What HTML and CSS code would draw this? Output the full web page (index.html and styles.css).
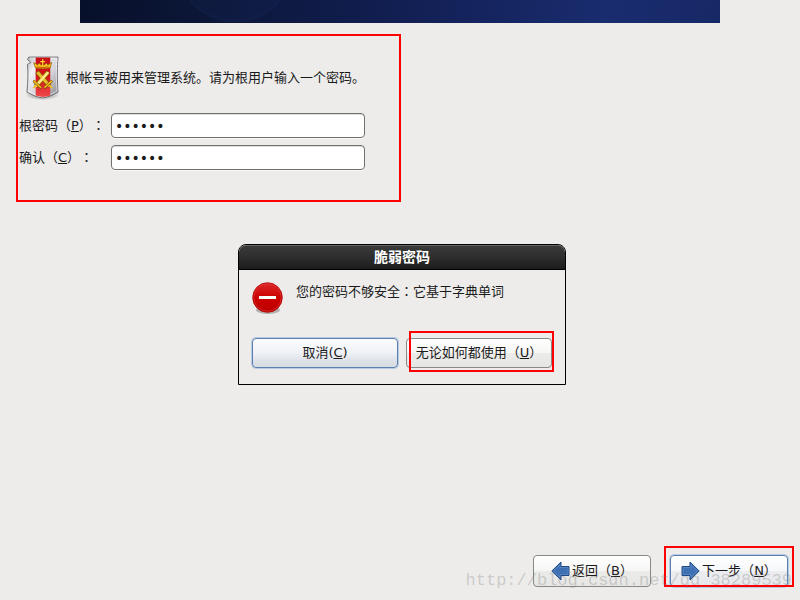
FILE: index.html
```html
<!DOCTYPE html>
<html lang="zh-CN">
<head>
    <meta charset="UTF-8">
    <meta name="viewport" content="width=device-width, initial-scale=1.0">
    <title>根密码</title>
    <link rel="stylesheet" href="styles.css">
</head>
<body>
    <header class="banner"></header>

    <main class="content">
        <!-- Root password -->
        <form class="password-form highlight">
            <div class="intro">
                <svg class="shield" viewBox="0 0 36 46" aria-hidden="true">
                    <defs>
                        <linearGradient id="steel" x1="0" y1="0" x2="1" y2="1">
                            <stop offset="0" stop-color="#b4b4ba"/>
                            <stop offset="0.25" stop-color="#f2f2f5"/>
                            <stop offset="0.6" stop-color="#d2d2d8"/>
                            <stop offset="1" stop-color="#85858a"/>
                        </linearGradient>
                        <linearGradient id="band" x1="0" y1="0" x2="0" y2="1">
                            <stop offset="0" stop-color="#c80f18"/>
                            <stop offset="0.5" stop-color="#d8131c"/>
                            <stop offset="1" stop-color="#ee4a4a"/>
                        </linearGradient>
                        <radialGradient id="shade">
                            <stop offset="0" stop-color="#000000" stop-opacity="0.5"/>
                            <stop offset="1" stop-color="#000000" stop-opacity="0"/>
                        </radialGradient>
                    </defs>
                    <ellipse cx="18" cy="40" rx="18" ry="6" fill="url(#shade)"/>
                    <path d="M4 1.500H34C33 10 33 26 34 37.500C29 40 24 43 18 43.500C12 43 7 40 2 37.500C3 27 3.500 17 2.500 9L6 7L2.500 4Z" fill="url(#steel)" stroke="#6c6c70"/>
                    <path d="M5 2.500H33C32 12 32 27 33 36.500C28 39 23 42 18 42.500C13 42 8 39 3 36.500" fill="none" stroke="#ffffff" stroke-opacity="0.6"/>
                    <path d="M11 2H26V41Q22 42.500 18 42.500Q14 42 11 41Z" fill="url(#band)"/>
                    <path d="M10.500 12.500L9 7L13 9.500L14.500 7.500L16.500 9.500H20L22 7.500L23.500 9.500L27.500 7L26 12.500Q18 14.500 10.500 12.500Z" fill="#f8c81c" stroke="#8a5200" stroke-width="0.7"/>
                    <path d="M18.200 3.500V10M15.700 6.200H20.700" stroke="#ffd82d" stroke-width="1.200"/>
                    <path d="M12 11.500Q18 13 24.500 11.500" fill="none" stroke="#c4320c" stroke-width="0.8"/>
                    <path d="M12.300 16.500L25.500 31.500M24.200 16.500L11 31.500" stroke="#875000" stroke-width="4.600"/>
                    <path d="M12.800 17L25.500 31.500" stroke="#e8bc30" stroke-width="3.200"/>
                    <path d="M23.700 17L11 31.500" stroke="#f8dc62" stroke-width="3.200"/>
                    <path d="M24.200 17L12 30.500" stroke="#fff9cc" stroke-width="0.9"/>
                    <path d="M9.500 26.500L16 32.500M27 26.500L20.500 32.500" stroke="#7d4a00" stroke-width="2.800" stroke-linecap="round"/>
                    <path d="M9.500 26.500L16 32.500M27 26.500L20.500 32.500M11 31L9 33M25.500 31L27.500 33" stroke="#f0c020" stroke-width="1.700" stroke-linecap="round"/>
                </svg>
                <p>根帐号被用来管理系统。请为根用户输入一个密码。</p>
            </div>
            <div class="form-group">
                <label for="password">根密码（<u>P</u>）<span class="colon" lang="zh-TW">：</span></label>
                <input type="password" id="password" name="password" value="123456">
            </div>
            <div class="form-group">
                <label for="confirm">确认（<u>C</u>）<span class="colon" lang="zh-TW">：</span></label>
                <input type="password" id="confirm" name="confirm" value="123456">
            </div>
        </form>

        <!-- Weak password warning -->
        <section class="dialog" role="dialog" aria-labelledby="dialogTitle">
            <h2 class="dialog-title" id="dialogTitle">脆弱密码</h2>
            <div class="dialog-body">
                <div class="message">
                    <svg class="stop-icon" viewBox="0 0 32 34" aria-hidden="true">
                        <defs>
                            <linearGradient id="stop" x1="0" y1="0" x2="0" y2="1">
                                <stop offset="0" stop-color="#dc2a2a"/>
                                <stop offset="0.5" stop-color="#cc0000"/>
                                <stop offset="1" stop-color="#bd0000"/>
                            </linearGradient>
                        </defs>
                        <ellipse cx="16" cy="28" rx="12" ry="4" fill="#000000" fill-opacity="0.25"/>
                        <circle cx="15.500" cy="15.500" r="14.800" fill="url(#stop)" stroke="#b00000" stroke-width="0.8"/>
                        <circle cx="15.500" cy="15.500" r="13.700" fill="none" stroke="#e04040" stroke-width="0.6"/>
                        <path d="M7 14H24V17H7Z" fill="#ffffff"/>
                    </svg>
                    <p>您的密码不够安全<span class="colon" lang="zh-TW">：</span>它基于字典单词</p>
                </div>
                <div class="dialog-actions">
                    <button type="button" class="btn btn-focus">取消(<u>C</u>)</button>
                    <button type="button" class="btn btn-marked">无论如何都使用（<u>U</u>）</button>
                </div>
            </div>
        </section>
    </main>

    <footer class="nav">
        <button type="button" class="btn btn-nav">
            <svg class="arrow" viewBox="0 0 19 20" aria-hidden="true">
                <path d="M0.800 10L10 1V5.500H18V14.500H10V19Z" fill="#3f70b3" stroke="#204a87"/>
                <path d="M2.500 10L9 3.700V6.500H17V13.500H9V16.300Z" fill="none" stroke="#6f98cb" stroke-opacity="0.5"/>
            </svg>
            <span>返回（<u>B</u>）</span>
        </button>
        <button type="button" class="btn btn-nav btn-focus btn-marked">
            <svg class="arrow" viewBox="0 0 19 20" aria-hidden="true">
                <path d="M18.200 10L9 1V5.500H1V14.500H9V19Z" fill="#3f70b3" stroke="#204a87"/>
                <path d="M16.500 10L10 3.700V6.500H2V13.500H10V16.300Z" fill="none" stroke="#6f98cb" stroke-opacity="0.5"/>
            </svg>
            <span>下一步（<u>N</u>）</span>
        </button>
        <span class="watermark">http://blog.csdn.net/qq_38289539</span>
    </footer>
</body>
</html>
```
FILE: styles.css
```css
:root {
    --bg: #edeceb;
    --text: #1a1a1a;
    --mark: #ff0000;
    --border: #888884;
    --focus: #5a80b0;
}

* {
    margin: 0;
    padding: 0;
    box-sizing: border-box;
}

body {
    display: flex;
    flex-direction: column;
    min-height: 100vh;
    background: var(--bg);
    color: var(--text);
    font-family: "DejaVu Sans", "Noto Sans CJK SC", sans-serif;
    font-size: 13px;
    line-height: 18px;
    text-spacing-trim: space-all;
}

.banner {
    height: 23px;
    margin: 0 10%;
    background:
        radial-gradient(circle at 155px -37px, rgba(24, 44, 100, 0.15) 56px, rgba(24, 44, 100, 0.3) 58px, transparent 60px),
        linear-gradient(100deg, #07102a 0%, #0c1738 20%, #101c4b 42%, #14235c 60%, #192c6e 82%, #172866 100%);
}

.content {
    flex: 1;
    padding: 11px 12px 0 16px;
}

.highlight {
    border: 2px solid var(--mark);
}

.colon {
    font-family: "Noto Sans CJK TC", sans-serif;
}

/* Form */
.password-form {
    max-width: 385px;
    padding: 19px 34px 30px 1px;
}

.intro {
    display: flex;
    align-items: center;
    gap: 6px;
    margin-bottom: 12px;
    padding-left: 6px;
    white-space: nowrap;
}

.shield {
    width: 36px;
    height: 46px;
}

.form-group {
    display: flex;
    align-items: center;
}

.form-group + .form-group {
    margin-top: 7px;
}

.form-group label {
    width: 92px;
    white-space: nowrap;
}

.form-group input {
    flex: 1;
    min-width: 0;
    height: 25px;
    padding: 0 3px;
    border: 1px solid #70706d;
    border-radius: 4px;
    background: #ffffff;
    box-shadow: 0 1px 0 #f8f8f7, inset 0 1px 0 #dededc;
    color: var(--text);
    font-family: "DejaVu Sans", sans-serif;
    font-size: 14px;
}

/* Dialog */
.dialog {
    max-width: 328px;
    margin: 42px auto 0;
    border: 1px solid #000000;
    border-radius: 8px 8px 0 0;
    background: var(--bg);
}

.dialog-title {
    height: 25px;
    border-bottom: 1px solid #000000;
    border-radius: 7px 7px 0 0;
    background: linear-gradient(#3a3a3a, #2e2e2e 50%, #1c1c1c);
    box-shadow: inset 0 1px 0 #666666;
    color: #ffffff;
    font-size: 14px;
    line-height: 24px;
    text-align: center;
}

.dialog-body {
    padding: 12px 13px 16px;
}

.message {
    display: flex;
    gap: 12px;
    margin-bottom: 22px;
}

.stop-icon {
    width: 32px;
    height: 34px;
}

.dialog-actions {
    display: flex;
    gap: 8px;
}

.dialog-actions .btn {
    flex: 1;
}

/* Buttons */
.btn {
    position: relative;
    height: 30px;
    border: 1px solid var(--border);
    border-radius: 4px;
    background: linear-gradient(#ffffff, #f6f6f5 50%, #ebebea 51%, #e6e6e4);
    color: var(--text);
    font: inherit;
    text-spacing-trim: inherit;
    white-space: nowrap;
}

.btn-focus {
    border-color: var(--focus);
    background: linear-gradient(#fbfcfe, #eef1f6 50%, #dfe3e9 75%, #d7dbe2);
    box-shadow: 0 0 0 1px #b9cbe2;
}

.btn-marked::after {
    content: "";
    position: absolute;
    inset: -8px -3px -5px 2px;
    border: 2px solid var(--mark);
}

.btn-nav {
    display: flex;
    align-items: center;
    justify-content: center;
    gap: 2px;
    width: 118px;
    height: 32px;
}

.btn-nav.btn-focus {
    background: linear-gradient(#ffffff, #f6f7f9 50%, #ecedf0 51%, #e6e8ec);
}

.btn-nav.btn-marked::after {
    inset: -10px -7px -1px -7px;
}

.arrow {
    width: 19px;
    height: 20px;
}

.nav {
    position: relative;
    display: flex;
    justify-content: flex-end;
    gap: 19px;
    padding: 0 12px 13px;
}

.watermark {
    position: absolute;
    right: 8px;
    bottom: 10px;
    color: rgba(120, 120, 120, 0.3);
    font-family: "Liberation Mono", monospace;
    font-size: 17px;
    pointer-events: none;
}
```
